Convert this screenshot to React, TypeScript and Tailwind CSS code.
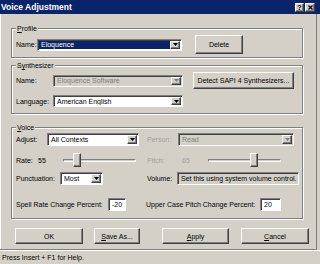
import { FC, ReactNode } from "react";
import clsx from "clsx";

const raised =
  "border border-t-white border-l-white border-b-[#404040] border-r-[#404040] shadow-[inset_-1px_-1px_0_#808080]";
const sunken =
  "border border-t-[#808080] border-l-[#808080] border-b-white border-r-white shadow-[inset_1px_1px_0_#404040]";

const Arrow: FC<{ disabled?: boolean }> = ({ disabled }) => (
  <div className={clsx("flex w-[10px] shrink-0 items-center justify-center bg-[#d4d0c8]", raised)}>
    <svg width="5" height="3" viewBox="0 0 5 3">
      <polygon points="0,0 5,0 2.5,3" fill={disabled ? "#808080" : "#000"} />
    </svg>
  </div>
);

const Combo: FC<{
  value: string;
  className: string;
  disabled?: boolean;
  selected?: boolean;
}> = ({ value, className, disabled, selected }) => (
  <div
    className={clsx(
      "flex shrink-0 p-[1px]",
      sunken,
      disabled ? "bg-[#d4d0c8]" : "bg-white",
      className
    )}
  >
    <div
      className={clsx(
        "flex flex-1 items-center overflow-hidden whitespace-nowrap pl-[2px]",
        selected && "bg-[#0a246a] text-white",
        disabled && "text-[#808080]"
      )}
    >
      {value}
    </div>
    <Arrow disabled={disabled} />
  </div>
);

const Field: FC<{ value: string; className: string; gray?: boolean }> = ({
  value,
  className,
  gray,
}) => (
  <div
    className={clsx(
      "flex shrink-0 items-center whitespace-nowrap pl-[3px]",
      sunken,
      gray ? "bg-[#d4d0c8]" : "bg-white",
      className
    )}
  >
    {value}
  </div>
);

const Button: FC<{ children: ReactNode; className: string }> = ({
  children,
  className,
}) => (
  <div
    className={clsx(
      "flex shrink-0 items-center justify-center bg-[#d4d0c8]",
      raised,
      className
    )}
  >
    {children}
  </div>
);

const Slider: FC<{ className: string; thumb: string }> = ({ className, thumb }) => (
  <div className={clsx("relative flex h-[14px] shrink-0 items-center", className)}>
    <div className="h-[3px] w-full border border-t-[#808080] border-l-[#808080] border-b-white border-r-white bg-[#d4d0c8]" />
    <div className={clsx("absolute top-0 h-[14px] w-[8px] bg-[#d4d0c8]", raised, thumb)} />
  </div>
);

const Group: FC<{ label: ReactNode; className: string; children: ReactNode }> = ({
  label,
  className,
  children,
}) => (
  <div
    className={clsx(
      "flex w-[292px] flex-col border border-[#808080] shadow-[inset_1px_1px_0_#fff,1px_1px_0_#fff]",
      className
    )}
  >
    <span className="-mb-[1px] -mt-[5px] ml-[4px] h-[9px] self-start bg-[#d4d0c8] px-[1px]">
      {label}
    </span>
    {children}
  </div>
);

export default function App() {
  return (
    <div className="flex h-[264px] w-[320px] flex-col overflow-hidden bg-[#d4d0c8] font-['Liberation_Sans',Arial,sans-serif] text-[7px] leading-[9px] text-black">
      {/* title bar */}
      <div className="flex h-[14px] shrink-0 items-center justify-between bg-[#0a246a] pl-[1px] pr-[5px]">
        <span className="text-[8.5px] font-bold text-white">Voice Adjustment</span>
        <div className="flex gap-[1px]">
          <div className={clsx("flex h-[9px] w-[9px] items-center justify-center bg-[#d4d0c8] text-[7px] font-bold leading-none", raised)}>
            ?
          </div>
          <div className={clsx("flex h-[9px] w-[10px] items-center justify-center bg-[#d4d0c8]", raised)}>
            <svg width="5" height="5" viewBox="0 0 5 5">
              <path d="M0.5 0.5L4.5 4.5M4.5 0.5L0.5 4.5" stroke="#000" strokeWidth="1.3" />
            </svg>
          </div>
        </div>
      </div>

      {/* client */}
      <div className="flex h-[236px] w-[317px] shrink-0 flex-col border-b border-r border-b-[#808080] border-r-[#808080] pl-[11px] shadow-[inset_1px_0_0_#fff]">
        <Group label={<><u>P</u>rofile</>} className="mt-[14px] h-[30px]">
          <div className="mt-[3px] flex h-[19px] items-center pl-[4px]">
            <span className="w-[21px] shrink-0">Name:</span>
            <Combo value="Eloquence" selected className="h-[12px] w-[145px]" />
            <Button className="ml-[13px] h-[19px] w-[48px]">Delete</Button>
          </div>
        </Group>

        <Group label={<>S<u>y</u>nthesizer</>} className="mt-[7px] h-[49px]">
          <div className="mt-[3px] flex h-[17px] items-center pl-[4px]">
            <span className="w-[37px] shrink-0">Name:</span>
            <Combo value="Eloquence Software" disabled className="h-[12px] w-[130px]" />
            <Button className="ml-[10px] h-[17px] w-[101px]">Detect SAPI 4 Synthesizers...</Button>
          </div>
          <div className="mt-[6px] flex h-[12px] items-center pl-[4px]">
            <span className="w-[37px] shrink-0">Language:</span>
            <Combo value="American English" className="h-[12px] w-[130px]" />
          </div>
        </Group>

        <Group label={<><u>V</u>oice</>} className="mt-[13px] h-[92px]">
          <div className="mt-[2px] grid grid-cols-[131px_1fr] pl-[4px]">
            <div className="flex h-[13px] items-center">
              <span className="w-[31px] shrink-0">Adjust:</span>
              <Combo value="All Contexts" className="h-[13px] w-[92px]" />
            </div>
            <div className="flex h-[13px] items-center">
              <span className="w-[31px] shrink-0 text-[#a0a0a0]">Person:</span>
              <Combo value="Read" disabled className="h-[13px] w-[116px]" />
            </div>

            <div className="mt-[7px] flex h-[14px] items-center">
              <span className="w-[22px] shrink-0">Rate:</span>
              <span className="w-[25px] shrink-0">55</span>
              <Slider className="w-[73px]" thumb="left-[10px]" />
            </div>
            <div className="mt-[7px] flex h-[14px] items-center">
              <span className="w-[35px] shrink-0 text-[#a0a0a0]">Pitch:</span>
              <span className="w-[26px] shrink-0 text-[#a0a0a0]">65</span>
              <Slider className="w-[73px]" thumb="left-[42px]" />
            </div>

            <div className="mt-[5px] flex h-[13px] items-center">
              <span className="w-[44px] shrink-0">Punctuation:</span>
              <Combo value="Most" className="h-[13px] w-[43px]" />
            </div>
            <div className="mt-[5px] flex h-[13px] items-center">
              <span className="w-[30px] shrink-0">Volume:</span>
              <Field value="Set this using system volume control." gray className="h-[13px] w-[122px]" />
            </div>

            <div className="mt-[13px] flex h-[13px] items-center">
              <span className="w-[92px] shrink-0">Spell Rate Change Percent:</span>
              <Field value="-20" className="h-[13px] w-[18px]" />
            </div>
            <div className="-ml-[1px] mt-[13px] flex h-[13px] items-center">
              <span className="w-[114px] shrink-0">Upper Case Pitch Change Percent:</span>
              <Field value="20" className="h-[13px] w-[21px]" />
            </div>
          </div>
        </Group>

        <div className="mt-[9px] flex h-[16px] pl-[4px]">
          <Button className="h-[16px] w-[68px]">OK</Button>
          <Button className="ml-[11px] h-[16px] w-[46px]">
            <span><u>S</u>ave As...</span>
          </Button>
          <Button className="ml-[22px] h-[16px] w-[67px]">
            <span><u>A</u>pply</span>
          </Button>
          <Button className="ml-[12px] h-[16px] w-[68px]">
            <span><u>C</u>ancel</span>
          </Button>
        </div>
      </div>

      {/* status bar */}
      <div className="flex h-[14px] shrink-0 items-center pl-[2px] shadow-[inset_0_1px_0_#fff]">
        Press Insert + F1 for Help.
      </div>
    </div>
  );
}
